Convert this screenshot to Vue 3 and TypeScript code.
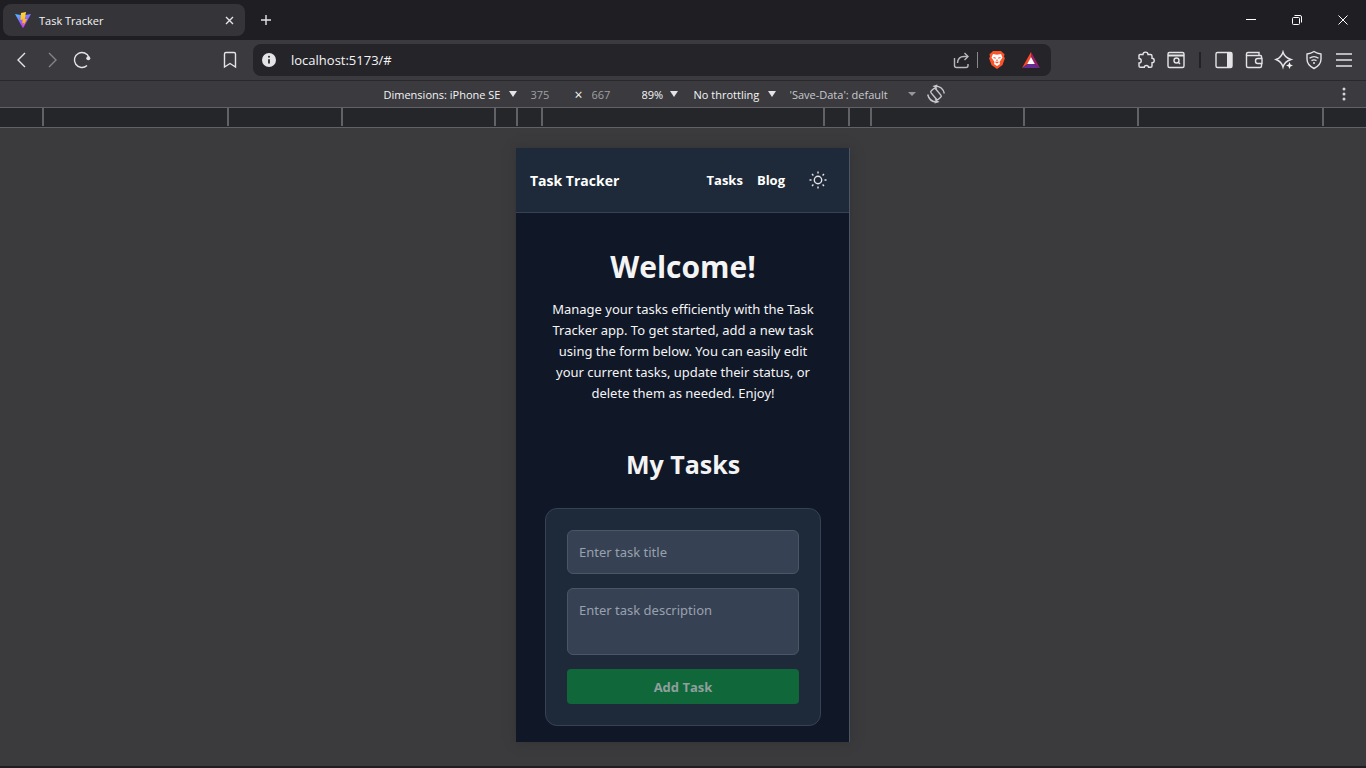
<script setup lang="ts">
import { ref } from 'vue'

const rulerSegments: number[] = [185, 114, 153, 22, 25, 282, 25, 22, 153, 114, 187]

const address = ref('localhost:5173/#')
const viewportWidth = ref('375')
const viewportHeight = ref('667')
const title = ref('')
const description = ref('')
</script>

<template>
  <div class="browser">
    <header class="tabs">
      <div class="tab">
        <svg class="favicon" width="16" height="16" viewBox="0 0 32 32" aria-hidden="true">
          <defs>
            <linearGradient id="vg" x1="0" y1="0" x2="0.5" y2="1">
              <stop offset="0" stop-color="#41c8ff" />
              <stop offset="0.5" stop-color="#8a6cff" />
              <stop offset="1" stop-color="#c636f0" />
            </linearGradient>
            <linearGradient id="vy" x1="0" y1="0" x2="0" y2="1">
              <stop offset="0" stop-color="#ffd93a" />
              <stop offset="1" stop-color="#ffa800" />
            </linearGradient>
          </defs>
          <path d="M0 4 L16 7 L32 4 L17 31 Q16 32 15 31 Z" fill="url(#vg)" />
          <path d="M22 0 L12 2 L11 16 L15.500 15 L14 23 L18 21.500 L16.500 28 L24 14 L19.500 14.500 Z" fill="url(#vy)" />
        </svg>
        <span class="tab-title">Task Tracker</span>
        <button class="tab-close" aria-label="Close tab">
          <svg width="9" height="9" viewBox="0 0 9 9"><path d="M1 1 L8 8 M8 1 L1 8" /></svg>
        </button>
      </div>
      <button class="new-tab" aria-label="New tab">
        <svg width="12" height="12" viewBox="0 0 12 12"><path d="M6 1 V11 M1 6 H11" /></svg>
      </button>
      <div class="window-controls">
        <button aria-label="Minimize">
          <svg width="12" height="12" viewBox="0 0 12 12" shape-rendering="crispEdges"><path d="M1 5.500 H11" /></svg>
        </button>
        <button aria-label="Restore">
          <svg width="12" height="12" viewBox="0 0 12 12"><rect x="1.500" y="3.500" width="7" height="7" rx="1" /><path d="M3.500 1.500 H9 Q10.500 1.500 10.500 3 V8.500" /></svg>
        </button>
        <button aria-label="Close window">
          <svg width="12" height="12" viewBox="0 0 12 12"><path d="M1.500 1.500 L10.500 10.500 M10.500 1.500 L1.500 10.500" /></svg>
        </button>
      </div>
    </header>

    <nav class="toolbar" aria-label="Browser toolbar">
      <button class="tool" aria-label="Back">
        <svg width="20" height="20" viewBox="0 0 20 20"><path d="M13 3 L6 10 L13 17" /></svg>
      </button>
      <button class="tool dim" aria-label="Forward">
        <svg width="20" height="20" viewBox="0 0 20 20"><path d="M7 3 L14 10 L7 17" /></svg>
      </button>
      <button class="tool" aria-label="Reload">
        <svg width="20" height="20" viewBox="0 0 20 20"><path d="M15 15.500 A7.500 7.500 0 1 1 17 7.500" /><circle cx="16.300" cy="8.200" r="2" class="solid" /></svg>
      </button>
      <div class="location">
        <button class="tool" aria-label="Bookmark">
          <svg width="20" height="20" viewBox="0 0 20 20"><path d="M4.500 4 Q4.500 2.500 6 2.500 H14 Q15.500 2.500 15.500 4 V17 L10 13.500 L4.500 17 Z" /></svg>
        </button>
        <div class="address">
          <button class="info" aria-label="Site information">
            <svg width="16" height="16" viewBox="0 0 16 16"><circle cx="8" cy="8" r="7" fill="#e4e4e7" stroke="none" /><circle cx="8" cy="4.800" r="1" fill="#29292d" stroke="none" /><path d="M8 7.200 V11.500" stroke="#29292d" stroke-width="1.800" /></svg>
          </button>
          <input v-model="address" class="url" type="text" aria-label="Address" />
          <button class="tool share" aria-label="Share">
            <svg width="20" height="20" viewBox="0 0 20 20"><path d="M3.500 8 V15.500 Q3.500 17.500 5.500 17.500 H15 Q17 17.500 17 15.500 V14" /><path d="M6.500 13 Q7 6.500 13 6.500 H17" /><path d="M13.500 3 L17 6.500 L13.500 10" /></svg>
          </button>
          <span class="address-line"></span>
          <button class="brand" aria-label="Brave Shields">
            <svg width="18" height="20" viewBox="0 0 18 20"><path d="M5 1 H13 L15 3 L16.500 4 L16 7 L17 8 L14.500 15 L9 19 L3.500 15 L1 8 L2 7 L1.500 4 L3 3 Z" fill="#fb542b" stroke="none" /><path d="M5 4 L9 4.800 L13 4 L14.500 7.500 L12.500 10.500 L11.500 12 L12 14 L9 16 L6 14 L6.500 12 L5.500 10.500 L3.500 7.500 Z" fill="#fff" stroke="none" /><path d="M5.500 7.500 L7.800 8.300 M12.500 7.500 L10.200 8.300 M9 9.500 V11 M7.500 11.800 L9 12.700 L10.500 11.800" stroke="#fb542b" stroke-width="1.200" /></svg>
          </button>
          <button class="brand bat" aria-label="Brave Rewards">
            <svg width="18" height="16" viewBox="0 0 18 16"><path d="M9 0 L0 16 L5.500 12 L9 5 Z" fill="#ff4724" stroke="none" /><path d="M9 0 L18 16 L12.500 12 L9 5 Z" fill="#9e1f63" stroke="none" /><path d="M0 16 H18 L12.500 12 H5.500 Z" fill="#662d91" stroke="none" /><path d="M9 5 L12.800 12 H5.200 Z" fill="#fff" stroke="none" /></svg>
          </button>
        </div>
      </div>
      <button class="tool" aria-label="Extensions">
        <svg width="20" height="20" viewBox="0 0 20 20"><path d="M4 4.500 H7 C7 1.300 12 1.300 12 4.500 H14.500 Q16 4.500 16 6 V8.200 C19 8.200 19 12.800 16 12.800 V16 Q16 17.300 14.700 17.300 H12.500 C12.500 14.800 8.300 14.800 8.300 17.300 H4.500 Q3 17.300 3 16 V13 C6 13 6 8.500 3 8.500 V5.500 Q3 4.500 4 4.500 Z" /></svg>
      </button>
      <button class="tool" aria-label="Search tabs">
        <svg width="20" height="20" viewBox="0 0 20 20"><rect x="2" y="2.500" width="16" height="15" rx="1.500" /><path d="M2 5.500 H18" stroke-width="2" /><circle cx="10.500" cy="10.500" r="2.500" /><path d="M12.500 12.500 L14 14" /></svg>
      </button>
      <span class="tool-line"></span>
      <button class="tool" aria-label="Sidebar">
        <svg width="20" height="20" viewBox="0 0 20 20"><rect x="2" y="2.500" width="16" height="15" rx="1.500" /><path d="M13 3 H18 V17 H13 Z" class="solid" /></svg>
      </button>
      <button class="tool" aria-label="Wallet">
        <svg width="20" height="20" viewBox="0 0 20 20"><path d="M17.500 8 V6.500 Q17.500 5.500 16.500 5.500 H2.500 V16 Q2.500 17.500 4 17.500 H16 Q17.500 17.500 17.500 16 V14" /><path d="M2.500 5.500 V4 Q2.500 2.500 4 2.500 H15 V5.500" /><path d="M18 8.500 H13.500 Q11.500 8.500 11.500 11 Q11.500 13.500 13.500 13.500 H18 Z" /></svg>
      </button>
      <button class="tool" aria-label="Assistant">
        <svg width="20" height="20" viewBox="0 0 20 20"><path d="M9 2 Q10.500 7.500 17 9.500 Q10.500 11.500 9 17 Q7.500 11.500 2 9.500 Q7.500 7.500 9 2 Z" /><path d="M15.500 12 L16.500 14.500 L19 15.500 L16.500 16.500 L15.500 19 L14.500 16.500 L12 15.500 L14.500 14.500 Z" class="spark" /></svg>
      </button>
      <button class="tool" aria-label="VPN">
        <svg width="20" height="20" viewBox="0 0 20 20"><path d="M10 1.500 Q13 3.500 17 4 V9 Q17 15 10 18.500 Q3 15 3 9 V4 Q7 3.500 10 1.500 Z" /><path d="M5.500 8.300 Q10 5 14.500 8.300 M7.500 10.700 Q10 9 12.500 10.700" /><circle cx="10" cy="13" r="1" class="solid" /></svg>
      </button>
      <button class="tool" aria-label="Menu">
        <svg width="20" height="20" viewBox="0 0 20 20" class="menu"><path d="M2 4 H18 M2 10 H18 M2 16 H18" /></svg>
      </button>
    </nav>

    <section class="device-bar" aria-label="Device toolbar">
      <div class="device-controls">
        <label class="picker device">
          <select aria-label="Device"><option>Dimensions: iPhone SE</option></select>
          <svg width="8" height="6" viewBox="0 0 8 6"><path d="M0 0 H8 L4 6 Z" /></svg>
        </label>
        <input v-model="viewportWidth" class="size" type="text" aria-label="Width" />
        <span class="times">×</span>
        <input v-model="viewportHeight" class="size" type="text" aria-label="Height" />
        <label class="picker zoom">
          <select aria-label="Zoom"><option>89%</option></select>
          <svg width="8" height="6" viewBox="0 0 8 6"><path d="M0 0 H8 L4 6 Z" /></svg>
        </label>
        <label class="picker throttle">
          <select aria-label="Throttling"><option>No throttling</option></select>
          <svg width="8" height="6" viewBox="0 0 8 6"><path d="M0 0 H8 L4 6 Z" /></svg>
        </label>
        <label class="picker save-data">
          <select aria-label="Save-Data"><option>'Save-Data': default</option></select>
          <svg width="8" height="4" viewBox="0 0 8 4"><path d="M0 0 H8 L4 4 Z" /></svg>
        </label>
        <button class="rotate" aria-label="Rotate">
          <svg width="20" height="20" viewBox="0 0 20 20"><rect x="7" y="4.500" width="6" height="11" rx="1.500" transform="rotate(-40 10 10)" /><path d="M11 4.500 L8 2.200 L11.500 1.200 M8 2.200 Q16.500 1.500 18.300 9.500" /><path d="M9 15.500 L12 17.800 L8.500 18.800 M12 17.800 Q3.500 18.500 1.700 10.500" /></svg>
        </button>
      </div>
      <button class="more" aria-label="More options">
        <svg width="4" height="14" viewBox="0 0 4 14"><circle cx="2" cy="2" r="1.500" /><circle cx="2" cy="7" r="1.500" /><circle cx="2" cy="12" r="1.500" /></svg>
      </button>
    </section>

    <div class="ruler">
      <span v-for="(width, index) in rulerSegments" :key="index" class="segment" :style="{ width: `${width}px` }"></span>
    </div>

    <main class="stage">
      <div class="phone">
        <header class="app-header">
          <strong class="app-name">Task Tracker</strong>
          <nav class="app-nav">
            <a href="#">Tasks</a>
            <a href="#">Blog</a>
            <button class="theme" aria-label="Toggle theme">
              <svg width="20" height="20" viewBox="0 0 20 20"><circle cx="10" cy="10" r="3.700" /><path d="M10 1.500 V3.500 M10 16.500 V18.500 M1.500 10 H3.500 M16.500 10 H18.500 M4 4 L5.400 5.400 M14.600 14.600 L16 16 M4 16 L5.400 14.600 M14.600 5.400 L16 4" /></svg>
            </button>
          </nav>
        </header>
        <div class="content">
          <h1>Welcome!</h1>
          <p>Manage your tasks efficiently with the Task Tracker app. To get started, add a new task using the form below. You can easily edit your current tasks, update their status, or delete them as needed. Enjoy!</p>
          <h2>My Tasks</h2>
          <form class="card" @submit.prevent>
            <input v-model="title" class="field" type="text" placeholder="Enter task title" aria-label="Task title" />
            <textarea v-model="description" class="field area" placeholder="Enter task description" aria-label="Task description"></textarea>
            <button class="add" type="submit" disabled>Add Task</button>
          </form>
        </div>
      </div>
    </main>
  </div>
</template>

<style>
body {
  margin: 0;
  background: #3b3b3e;
}
</style>

<style scoped>
* {
  box-sizing: border-box;
}

.browser {
  display: flex;
  flex-direction: column;
  min-height: 100vh;
  color: #f4f4f5;
  background: #3b3b3e;
  border-bottom: 2px solid #1f1f22;
  font-family: "Open Sans", "Noto Sans", sans-serif;
}

button,
input,
select,
textarea {
  margin: 0;
  padding: 0;
  border: 0;
  background: transparent;
  color: inherit;
  font: inherit;
}

button {
  display: flex;
  align-items: center;
  justify-content: center;
  flex-shrink: 0;
}

svg {
  display: block;
  flex-shrink: 0;
  fill: none;
  stroke: #e4e4e7;
  stroke-width: 1.4;
}

.tabs {
  display: flex;
  align-items: center;
  height: 40px;
  padding-left: 3px;
  background: #1f1f23;
}

.tab {
  display: flex;
  align-items: center;
  gap: 8px;
  width: 242px;
  height: 32px;
  padding: 0 8px 0 12px;
  border-radius: 8px;
  background: #353539;
  font-size: 11px;
}

.favicon {
  stroke: none;
}

.tab-title {
  flex: 1;
}

.tab-close {
  width: 16px;
  height: 16px;
}

.new-tab {
  width: 32px;
  height: 32px;
  margin-left: 5px;
}

.window-controls {
  display: flex;
  margin-left: auto;
}

.window-controls button {
  width: 46px;
  height: 40px;
}

.window-controls svg {
  stroke: #ffffff;
  stroke-width: 1;
}

.toolbar {
  display: flex;
  align-items: center;
  height: 40px;
  padding: 0 7px;
  background: #3b3b3f;
}

.tool {
  width: 30px;
  height: 30px;
}

.dim svg {
  stroke: #858589;
}

.solid {
  fill: #e4e4e7;
  stroke: none;
}

.spark {
  fill: #f4f4f5;
  stroke: none;
}

.tool .menu {
  stroke: #b9b9bd;
  stroke-width: 2;
}

.location {
  display: flex;
  align-items: center;
  gap: 8px;
  flex: 1;
  margin: 0 80px 0 118px;
}

.address {
  display: flex;
  align-items: center;
  flex: 1;
  height: 32px;
  padding: 0 11px 0 8px;
  border-radius: 8px;
  background: #252529;
}

.info {
  width: 16px;
  height: 16px;
  margin-right: 14px;
}

.url {
  flex: 1;
  min-width: 0;
  font-size: 13px;
}

.share svg {
  stroke: #b9b9bd;
}

.address-line {
  width: 1px;
  height: 16px;
  margin: 0 10px 0 1px;
  background: #8a8a8e;
}

.brand {
  width: 18px;
  height: 20px;
}

.bat {
  margin-left: 16px;
}

.tool-line {
  width: 2px;
  height: 16px;
  margin: 0 8px;
  background: #222226;
}

.device-bar {
  display: flex;
  align-items: center;
  height: 28px;
  padding-right: 7px;
  border-top: 1px solid #29292c;
  border-bottom: 1px solid #626266;
  background: #3b3b3f;
  font-size: 11px;
}

.device-controls {
  display: flex;
  align-items: center;
  justify-content: center;
  flex: 1;
}

.picker {
  display: flex;
  align-items: center;
}

.picker select {
  flex: 1;
  min-width: 0;
  appearance: none;
  outline: 0;
}

.picker svg {
  fill: #e4e4e7;
  stroke: none;
}

.device {
  width: 133px;
  margin-right: 14px;
}

.size {
  width: 44px;
  color: #a0a0a4;
}

.times {
  width: 17px;
  font-size: 14px;
}

.zoom {
  width: 36px;
  margin-left: 6px;
}

.throttle {
  width: 82px;
  margin-left: 16px;
}

.save-data {
  width: 126px;
  margin: 0 10px 0 14px;
  color: #c9c9cd;
}

.save-data svg {
  fill: #97979b;
}

.rotate svg {
  stroke: #c9c9cd;
}

.more {
  width: 30px;
  height: 24px;
}

.more svg {
  fill: #d4d4d8;
  stroke: none;
}

.ruler {
  display: flex;
  justify-content: center;
  height: 20px;
  overflow: hidden;
  border-bottom: 1px solid #626266;
  background: #25262a;
}

.segment {
  flex-shrink: 0;
  height: 18px;
  border-left: 2px solid #626266;
}

.segment:last-child {
  border-right: 2px solid #626266;
}

.stage {
  display: flex;
  flex: 1;
  align-items: flex-start;
  justify-content: center;
  padding: 20px 16px 24px;
}

.phone {
  width: 334px;
  border-right: 1px solid #4b5563;
  background: #101828;
  box-shadow: 0 0 10px #333335;
}

.app-header {
  display: flex;
  align-items: center;
  justify-content: space-between;
  height: 65px;
  padding: 0 17px 0 14px;
  border-bottom: 1px solid #364153;
  background: #1e2939;
}

.app-name {
  color: #ffffff;
  font-size: 14px;
  font-weight: 700;
}

.app-nav {
  display: flex;
  align-items: center;
  gap: 14px;
  font-size: 13px;
  font-weight: 700;
}

.app-nav a {
  color: #ffffff;
  text-decoration: none;
}

.theme {
  width: 28px;
  height: 28px;
  margin-left: 5px;
}

.content {
  padding: 32px 28px 16px 29px;
  text-align: center;
}

h1 {
  margin: 0;
  font-size: 30px;
  font-weight: 700;
  line-height: 44px;
}

p {
  margin: 10px 0 0;
  font-family: "Noto Sans", "Open Sans", sans-serif;
  font-size: 13px;
  line-height: 21px;
}

h2 {
  margin: 40px 0 0;
  font-size: 25px;
  font-weight: 700;
  line-height: 40px;
}

.card {
  display: flex;
  flex-direction: column;
  gap: 14px;
  margin-top: 24px;
  padding: 21px;
  border: 1px solid #364153;
  border-radius: 12px;
  background: #1e2939;
  font-size: 13px;
}

.field {
  width: 100%;
  height: 44px;
  padding: 0 11px;
  border: 1px solid #4a5565;
  border-radius: 6px;
  background: #364153;
  font-family: "Noto Sans", "Open Sans", sans-serif;
}

.field::placeholder {
  color: #99a1af;
  opacity: 1;
}

.area {
  display: block;
  height: 67px;
  padding: 11px;
  line-height: 21px;
  resize: none;
}

.add {
  height: 35px;
  border-radius: 4px;
  background: #10683a;
  color: #8f9f9d;
  font-weight: 700;
}
</style>
